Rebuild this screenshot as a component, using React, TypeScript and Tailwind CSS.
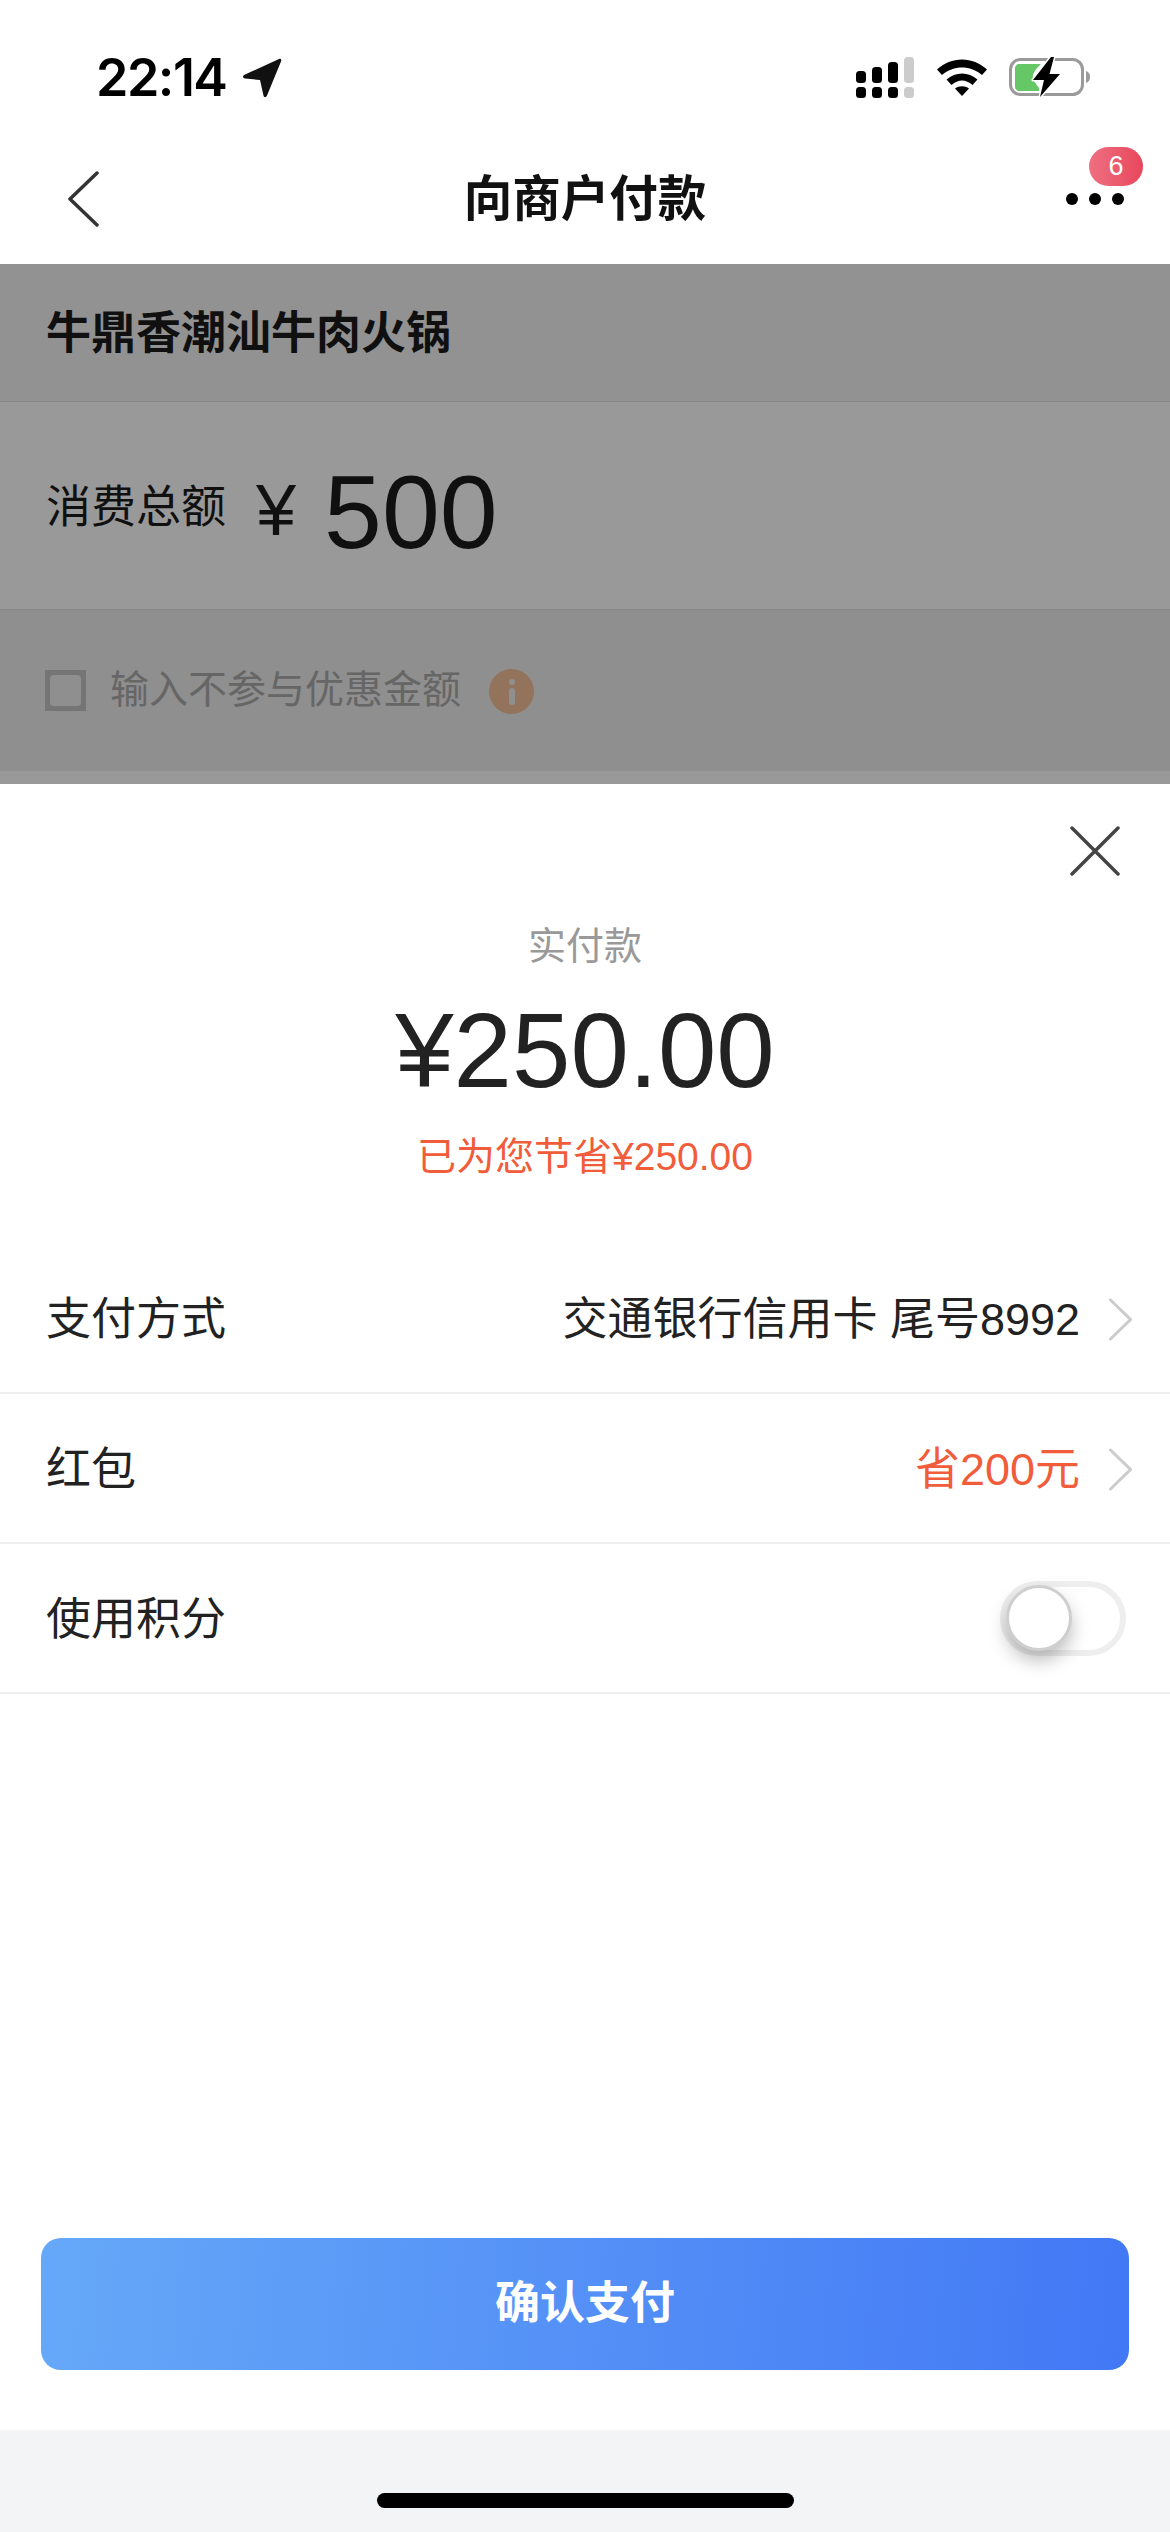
const sans = "font-['Liberation_Sans','Noto_Sans_CJK_SC',sans-serif]";

const Signal = () => (
  <svg width="58" height="42" viewBox="0 0 58 42">
    <rect x="0" y="14" width="10" height="12" rx="3.5" fill="#000" />
    <rect x="16" y="10" width="10" height="16" rx="3.5" fill="#000" />
    <rect x="32" y="5" width="10" height="21" rx="3.5" fill="#000" />
    <rect x="48" y="0" width="10" height="26" rx="3.5" fill="#ccc" />
    <rect x="0" y="30" width="10" height="11" rx="3.5" fill="#000" />
    <rect x="16" y="30" width="10" height="11" rx="3.5" fill="#000" />
    <rect x="32" y="30" width="10" height="11" rx="3.5" fill="#000" />
    <rect x="48" y="30" width="10" height="11" rx="3.5" fill="#ccc" />
  </svg>
);

const Wifi = () => (
  <svg width="50" height="37" viewBox="0 0 50 37">
    <path d="M0 10.500C14-3 36-3 50 10.500L45 16C33.500 6 16.500 6 5 16Z" fill="#000" />
    <path d="M9.500 20.500C18.500 12.500 31.500 12.500 40.500 20.500L35.500 26C28.500 20 21.500 20 14.500 26Z" fill="#000" />
    <path d="M18 29.500C22 26.500 28 26.500 32 29.500L25 37Z" fill="#000" />
  </svg>
);

const Battery = () => (
  <svg width="82" height="42" viewBox="0 0 82 42">
    <rect x="1.500" y="3.500" width="72" height="35" rx="10" fill="none" stroke="#9a9a9a" strokeWidth="3" />
    <path d="M77 15C80 16 81 18 81 21C81 24 80 26 77 27Z" fill="#9a9a9a" />
    <path d="M10 8H32C28 12 25 15 24 19C23 23 27 28 30 32V35H10C8 35 6 33 6 31V12C6 10 8 8 10 8Z" fill="#66c766" />
    <path
      d="M42 1L24 24H35L31 41L51 18H40.500L45 1Z"
      fill="#000"
      stroke="#fff"
      strokeWidth="3"
      strokeLinejoin="round"
      paintOrder="stroke"
    />
  </svg>
);

const Chevron = () => (
  <svg width="23" height="43" viewBox="0 0 23 43" className="ml-[29px]">
    <path d="M1.500 2L21.500 21.500L1.500 41" fill="none" stroke="#cccccc" strokeWidth="3" strokeLinecap="round" />
  </svg>
);

const Row = ({ label, children }: { label: string; children: React.ReactNode }) => (
  <div className="h-[150px] flex items-center justify-between pl-[46px] border-b-2 border-[#eeeeee]">
    <span className="mt-[3px] text-[45px] text-[#222222]">{label}</span>
    {children}
  </div>
);

export default function App() {
  return (
    <div className={`w-[1170px] h-[2532px] flex flex-col bg-white overflow-hidden ${sans}`}>
      {/* STATUS BAR */}
      <div className="h-[132px] shrink-0 flex items-start justify-between pt-[56px]">
        <div className="flex items-center pl-[96px]">
          <span className="font-['Inter',sans-serif] font-semibold text-[52px] leading-[44px] tracking-[-1.5px] text-black">
            22:14
          </span>
          <svg width="40" height="40" viewBox="0 0 40 40" className="ml-[15px]">
            <path
              d="M37 1C38.500 0 40 1.500 39 3.500L25 37.500C24 39.500 22 39.500 21.500 37.500L18 22L3 20.500C0.500 20 0.300 18 2.500 16.800Z"
              fill="#111111"
            />
          </svg>
        </div>
        <div className="flex items-start pr-[79px]">
          <div className="mt-[1px]"><Signal /></div>
          <div className="ml-[23px] mt-[3px]"><Wifi /></div>
          <div className="ml-[22px]"><Battery /></div>
        </div>
      </div>

      {/* NAV */}
      <div className="relative h-[132px] shrink-0 flex items-center justify-between">
        <div className="w-[200px] pl-[67px] pt-[2px]">
          <svg width="32" height="56" viewBox="0 0 32 56">
            <path d="M30 2L3 28L30 54" fill="none" stroke="#333333" strokeWidth="3.500" strokeLinecap="round" strokeLinejoin="round" />
          </svg>
        </div>
        <span className="text-[48.500px] font-bold text-[#111111] pt-[2px]">向商户付款</span>
        <div className="w-[200px] flex justify-end gap-[11px] pr-[46px] pt-[2px]">
          <span className="w-[12px] h-[12px] rounded-full bg-black" />
          <span className="w-[12px] h-[12px] rounded-full bg-black" />
          <span className="w-[12px] h-[12px] rounded-full bg-black" />
        </div>
        <span className="absolute left-[1089px] top-[15px] w-[54px] h-[39px] rounded-full bg-linear-to-r from-[#ee6f81] to-[#e8465c] text-white text-[27px] leading-[39px] text-center">
          6
        </span>
      </div>

      {/* DIMMED FORM */}
      <div className="relative h-[520px] shrink-0 bg-white">
        <div className="h-[138px] flex items-center pl-[46px] bg-[#f3f4f6] border-b border-[#e0e0e0]">
          <span className="mt-[2px] text-[45px] font-semibold text-[#1c1c1c]">牛鼎香潮汕牛肉火锅</span>
        </div>
        <div className="h-[208px] flex items-center pl-[46px] border-b border-[#e0e0e0]">
          <span className="mt-[5px] text-[45px] text-[#1c1c1c]">消费总额</span>
          <span className="ml-[30px] mt-[8px] text-[72px] text-[#1c1c1c] leading-none">¥</span>
          <span className="ml-[28px] mt-[12px] text-[104px] text-[#1c1c1c] leading-none">500</span>
        </div>
        <div className="h-[161px] flex items-center pl-[45px] bg-[#eeeeee]">
          <span className="w-[41px] h-[41px] bg-[#c4c4c4] p-[5px]">
            <span className="block w-full h-full bg-[#eeeeee] rounded-[4px]" />
          </span>
          <span className="ml-[24px] text-[39px] text-[#aaaaaa]">输入不参与优惠金额</span>
          <span className="ml-[28px] mt-[2px] w-[45px] h-[45px] rounded-full bg-[#f5c09a] flex flex-col items-center justify-center gap-[3px]">
            <span className="w-[6px] h-[6px] rounded-full bg-[#eeeeee]" />
            <span className="w-[6px] h-[17px] rounded-full bg-[#eeeeee]" />
          </span>
        </div>
        <div className="absolute inset-0 bg-black/40" />
      </div>

      {/* SHEET */}
      <div className="flex-1 flex flex-col bg-white">
        <div className="flex justify-end pt-[42px] pr-[50px]">
          <svg width="50" height="50" viewBox="0 0 50 50">
            <path d="M2 2L48 48M48 2L2 48" fill="none" stroke="#444444" strokeWidth="3.500" strokeLinecap="round" />
          </svg>
        </div>
        <div className="flex flex-col items-center">
          <span className="mt-[45px] text-[38px] leading-[50px] text-[#999999]">实付款</span>
          <span className="mt-[20px] text-[105px] leading-[120px] text-[#222222]">¥250.00</span>
          <span className="mt-[21px] text-[39px] leading-[50px] text-[#f15c3a]">已为您节省¥250.00</span>
        </div>
        <div className="mt-[62px]">
          <Row label="支付方式">
            <div className="mt-[3px] flex items-center pr-[38px]">
              <span className="text-[45px] text-[#222222]">交通银行信用卡 尾号8992</span>
              <Chevron />
            </div>
          </Row>
          <Row label="红包">
            <div className="mt-[3px] flex items-center pr-[38px]">
              <span className="text-[45px] text-[#f15c3a]">省200元</span>
              <Chevron />
            </div>
          </Row>
          <Row label="使用积分">
            <div className="mr-[44px] w-[126px] h-[75px] rounded-full border-[6px] border-[#eeeeee] flex items-center">
              <span className="block w-[66px] h-[66px] rounded-full bg-white border-[3px] border-[#cfcfcf] shadow-[0_10px_18px_rgba(0,0,0,0.25)]" />
            </div>
          </Row>
        </div>
        <div className="mt-auto px-[41px] pb-[60px]">
          <div className="h-[132px] rounded-[20px] bg-linear-[95deg] from-[#66a8f8] to-[#4278f5] flex items-center justify-center text-[45px] font-semibold text-white">
            确认支付
          </div>
        </div>
      </div>

      {/* HOME INDICATOR */}
      <div className="h-[102px] shrink-0 bg-[#f3f4f6] flex justify-center pt-[63px]">
        <div className="w-[417px] h-[15px] rounded-full bg-black" />
      </div>
    </div>
  );
}
